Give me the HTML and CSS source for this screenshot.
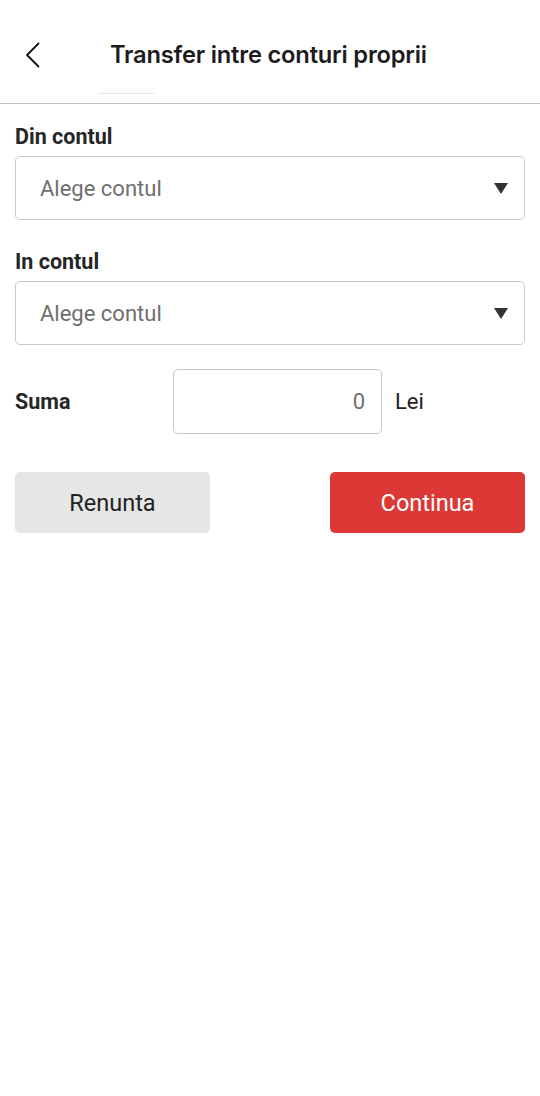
FILE: index.html
```html
<!DOCTYPE html>
<html lang="ro">
<head>
<meta charset="utf-8">
<title>Transfer intre conturi proprii</title>
<link rel="stylesheet" href="styles.css">
</head>
<body>
<header class="topbar">
  <button class="back" aria-label="Inapoi">
    <svg width="16" height="26" viewBox="0 0 16 26"><path d="M13.5 1.5 L2 13 L13.5 24.5" fill="none" stroke="#111" stroke-width="1.8" stroke-linecap="round" stroke-linejoin="round"/></svg>
  </button>
  <h1 class="title">Transfer intre conturi proprii</h1>
  <span class="tab-mark"></span>
</header>
<main class="form">
  <section class="field">
    <label class="label">Din contul</label>
    <div class="select"><span class="placeholder">Alege contul</span><span class="caret"></span></div>
  </section>
  <section class="field">
    <label class="label">In contul</label>
    <div class="select"><span class="placeholder">Alege contul</span><span class="caret"></span></div>
  </section>
  <section class="amount-row">
    <span class="label amount-label">Suma</span>
    <div class="amount-input">0</div>
    <span class="currency">Lei</span>
  </section>
  <section class="actions">
    <button class="btn btn-cancel">Renunta</button>
    <button class="btn btn-continue">Continua</button>
  </section>
</main>
</body>
</html>
```

FILE: styles.css
```css
html, body {
  margin: 0;
  padding: 0;
  background: #ffffff;
}
body {
  width: 540px;
  font-family: Roboto, "Liberation Sans", sans-serif;
  color: #222;
}
.topbar {
  position: relative;
  height: 104px;
  border-bottom: 1.5px solid #c4c4c4;
  display: flex;
  align-items: center;
  box-sizing: border-box;
  padding-top: 6px;
}
.back {
  border: 0;
  background: none;
  padding: 0;
  margin-left: 25px;
  width: 20px;
  height: 26px;
  display: flex;
  align-items: center;
}
.title {
  margin: 0 0 0 65px;
  font-family: Inter, "Noto Sans", sans-serif;
  font-weight: 600;
  font-size: 23.7px;
  color: #1c1c1e;
  letter-spacing: -0.2px;
}
.tab-mark {
  position: absolute;
  left: 98px;
  bottom: 9px;
  width: 56px;
  height: 1px;
  background: #e6e6e6;
}
.form {
  padding: 20px 15px 0 15px;
}
.field {
  margin-bottom: 29px;
}
.label {
  display: block;
  font-weight: 700;
  font-size: 21.5px;
  line-height: 26px;
  color: #262626;
  margin-bottom: 6px;
}
.select {
  height: 64px;
  box-sizing: border-box;
  border: 1px solid #c8c8c8;
  border-radius: 5px;
  display: flex;
  align-items: center;
  justify-content: space-between;
  padding: 0 16px 0 24px;
}
.placeholder {
  font-size: 22px;
  color: #6f6f6f;
}
.caret {
  width: 0;
  height: 0;
  border-left: 7.5px solid transparent;
  border-right: 7.5px solid transparent;
  border-top: 11px solid #333;
}
.amount-row {
  display: flex;
  align-items: center;
  margin-top: -5px;
}
.amount-label {
  margin: 0;
  width: 158px;
}
.amount-input {
  width: 209px;
  height: 65px;
  box-sizing: border-box;
  border: 1px solid #c8c8c8;
  border-radius: 5px;
  display: flex;
  align-items: center;
  justify-content: flex-end;
  padding-right: 16px;
  font-size: 22px;
  color: #6f6f6f;
}
.currency {
  margin-left: 13px;
  font-size: 22px;
  color: #222;
}
.actions {
  display: flex;
  justify-content: space-between;
  margin-top: 38px;
}
.btn {
  width: 195px;
  height: 61px;
  border: 0;
  border-radius: 5px;
  font-family: Roboto, "Liberation Sans", sans-serif;
  font-size: 23.5px;
}
.btn-cancel {
  background: #e6e6e6;
  color: #222;
}
.btn-continue {
  background: #dc3835;
  color: #fff;
}
```
